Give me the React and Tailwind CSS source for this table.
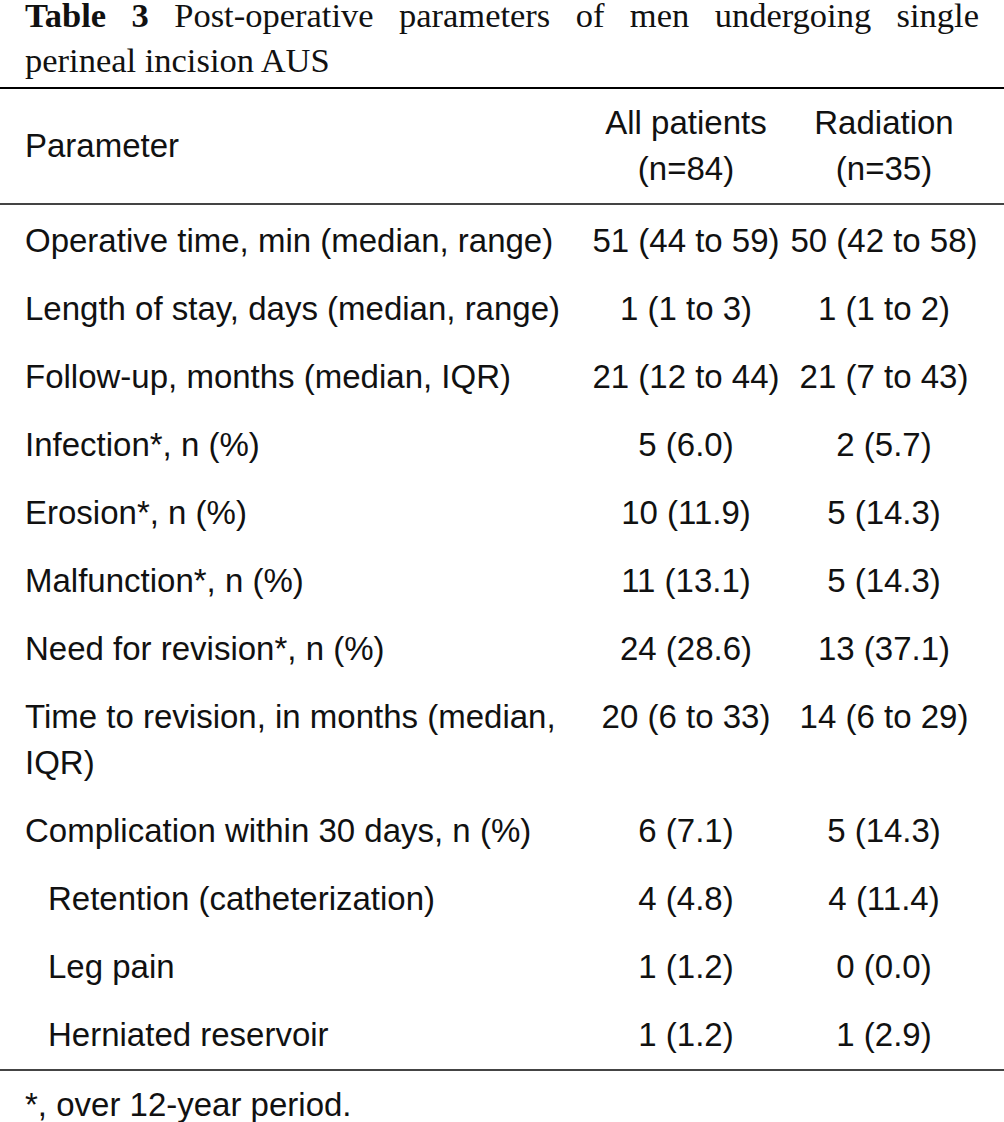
import React from 'react';

const rows = [
  { label: 'Operative time, min (median, range)', all: '51 (44 to 59)', rad: '50 (42 to 58)' },
  { label: 'Length of stay, days (median, range)', all: '1 (1 to 3)', rad: '1 (1 to 2)' },
  { label: 'Follow-up, months (median, IQR)', all: '21 (12 to 44)', rad: '21 (7 to 43)' },
  { label: 'Infection*, n (%)', all: '5 (6.0)', rad: '2 (5.7)' },
  { label: 'Erosion*, n (%)', all: '10 (11.9)', rad: '5 (14.3)' },
  { label: 'Malfunction*, n (%)', all: '11 (13.1)', rad: '5 (14.3)' },
  { label: 'Need for revision*, n (%)', all: '24 (28.6)', rad: '13 (37.1)' },
  { label: 'Time to revision, in months (median, IQR)', all: '20 (6 to 33)', rad: '14 (6 to 29)' },
  { label: 'Complication within 30 days, n (%)', all: '6 (7.1)', rad: '5 (14.3)' },
  { label: 'Retention (catheterization)', all: '4 (4.8)', rad: '4 (11.4)', sub: true },
  { label: 'Leg pain', all: '1 (1.2)', rad: '0 (0.0)', sub: true },
  { label: 'Herniated reservoir', all: '1 (1.2)', rad: '1 (2.9)', sub: true },
];

export default function App() {
  return (
    <div className="w-[1004px] bg-white text-[#111]">
      {/* Caption */}
      <div className="px-[25px] font-['Liberation_Serif',serif] text-[34.5px]">
        <div className="leading-[30px] text-justify [text-align-last:justify]">
          <span className="font-bold">Table 3</span> Post-operative parameters of men undergoing single
        </div>
        <div className="mt-[7px] leading-[47px]">perineal incision AUS</div>
      </div>

      <div className="mt-[3px] border-t-2 border-black font-['Liberation_Sans',Arial,sans-serif] text-[33px] leading-[46px]">
        {/* Header */}
        <div className="grid grid-cols-[562px_198px_198px] pl-[25px] py-[11px] border-b-2 border-[#444]">
          <div className="self-center">Parameter</div>
          <div className="text-center">All patients<br />(n=84)</div>
          <div className="text-center">Radiation<br />(n=35)</div>
        </div>

        {/* Body */}
        <div className="pt-[2px] border-b-2 border-[#444]">
          {rows.map((r) => (
            <div key={r.label} className="grid grid-cols-[562px_198px_198px] pl-[25px] py-[11px]">
              <div className={r.sub ? 'pl-[23px]' : ''}>{r.label}</div>
              <div className="text-center">{r.all}</div>
              <div className="text-center">{r.rad}</div>
            </div>
          ))}
        </div>
      </div>

      {/* Footnote */}
      <div className="px-[25px] pt-[11px] font-['Liberation_Sans',Arial,sans-serif] text-[33px] leading-[46px]">
        *, over 12-year period.
      </div>
    </div>
  );
}
